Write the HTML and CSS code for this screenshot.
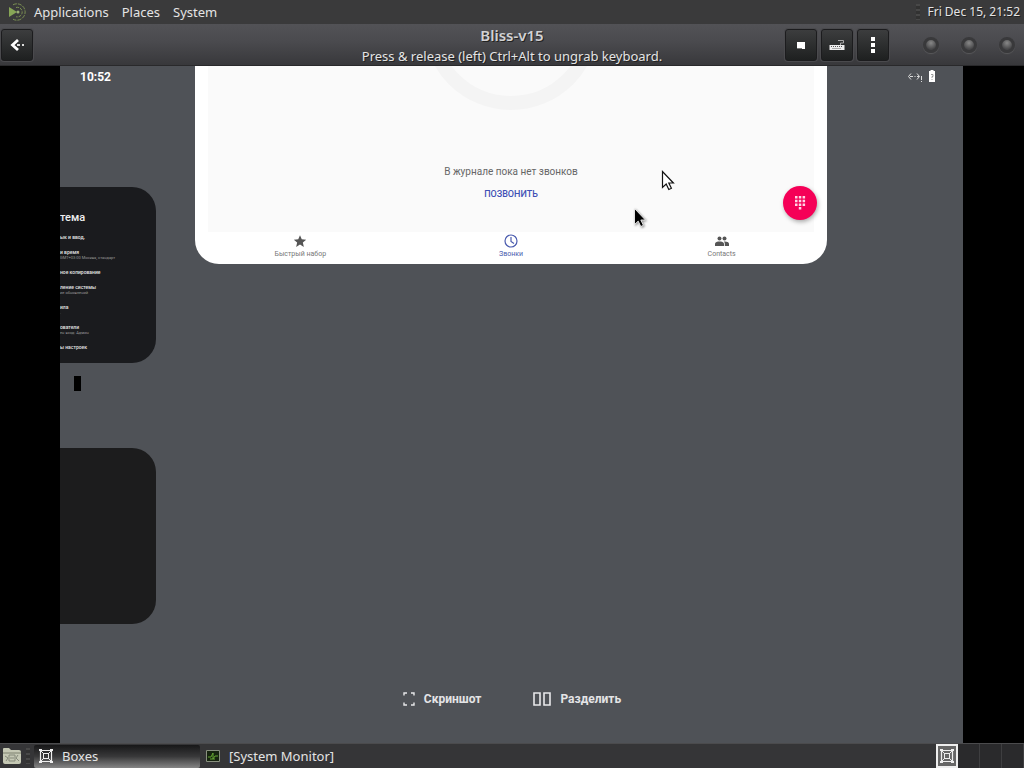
FILE: index.html
```html
<!DOCTYPE html>
<html lang="en">
<head>
<meta charset="utf-8">
<title>Bliss-v15</title>
<link rel="stylesheet" href="styles.css">
</head>
<body>
<svg class="defs" aria-hidden="true">
  <symbol id="boxes" viewBox="0 0 16 16"><g fill="none" stroke="#eee"><path d="M2.500 2.500h11v11h-11z" stroke-width="1.200"/><path d="M5.500 5.500h5v5h-5zM2 2l4 4M14 2l-4 4M2 14l4-4M14 14l-4-4"/></g><path fill="#eee" d="M1 1h3v2H1zM12 1h3v2h-3zM1 13h3v2H1zM12 13h3v2h-3z"/></symbol>
</svg>
<nav class="panel">
  <svg class="logo" width="20" height="20" viewBox="0 0 20 20" aria-hidden="true"><path d="M2 5v10l8-5z" fill="#87a556"/><g fill="none" stroke="#7b9153"><path d="M6 2.8A8.200 8.200 0 1 1 6 17.200" stroke-dasharray="4 1"/><path d="M9 5.500a4.800 4.800 0 1 1 0 9.200" stroke-dasharray="3 1"/></g><circle cx="11" cy="10" r="1.500" fill="#99ad75"/></svg>
  <button>Applications</button><button>Places</button><button>System</button>
  <span class="grip end"></span>
  <time>Fri Dec 15, 21:52</time>
</nav>
<header class="titlebar">
  <button class="tool" aria-label="Back"><svg width="18" height="18" viewBox="0 0 18 18"><path d="M10 4L4.500 9l5.500 5" fill="none" stroke="#fff" stroke-width="2.800"/><path d="M9 8h3v2H9zM14 8h2v2h-2z" fill="#ddd"/></svg></button>
  <div class="title"><h1>Bliss-v15</h1><p>Press &amp; release (left) Ctrl+Alt to ungrab keyboard.</p></div>
  <div class="right">
    <button class="tool" aria-label="Fullscreen"><svg width="18" height="18" viewBox="0 0 18 18"><path d="M5 6h8v7H5z" fill="#fff"/><path d="M5 12h5v1H5z" fill="#777"/></svg></button>
    <button class="tool" aria-label="Keyboard"><svg width="18" height="18" viewBox="0 0 18 18"><path d="M1.500 9h15v5h-15z" fill="#eee"/><path d="M3 10.500h12" stroke="#555" stroke-dasharray="1 1"/><path d="M4 12.500h9" stroke="#aaa"/><path d="M12.500 9V7h3V4.500H10" fill="none" stroke="#aaa"/></svg></button>
    <button class="tool" aria-label="Menu"><svg width="18" height="18" viewBox="0 0 18 18"><path d="M7 1h4v4H7zM7 7h4v4H7zM7 13h4v4H7z" fill="#fff"/></svg></button>
    <div class="window-controls"><button aria-label="Minimize"></button><button aria-label="Maximize"></button><button aria-label="Close"></button></div>
  </div>
</header>
<main class="screen">
  <div class="android" lang="ru">
    <aside class="recents">
      <time class="clock">10:52</time>
      <section class="card settings">
        <h2>тема</h2>
        <ul>
          <li><b>ык и ввод,</b></li>
          <li><b>и время</b><span>GMT+03:00 Москва, стандарт</span></li>
          <li><b>ное копирование</b></li>
          <li><b>ление системы</b><span>ие обновлений</span></li>
          <li><b>ила</b><span>.</span></li>
          <li><b>ователи</b><span>ен вход: Админ</span></li>
          <li><b>ы настроек</b></li>
        </ul>
      </section>
      <span class="caret"></span>
      <section class="card"></section>
    </aside>
    <div class="center">
      <section class="dialer">
        <div class="log">
          <div class="ring"></div>
          <p>В журнале пока нет звонков</p>
          <button class="call">ПОЗВОНИТЬ</button>
          <button class="fab" aria-label="Набор номера"><svg width="12" height="14" viewBox="0 0 12 14" fill="#ffd6e6"><path d="M1 0h2.500v2.500H1zM4.800 0h2.500v2.500H4.800zM8.600 0h2.500v2.500H8.600zM1 3.700h2.500v2.500H1zM4.800 3.700h2.500v2.500H4.800zM8.600 3.700h2.500v2.500H8.600zM1 7.400h2.500v2.500H1zM4.800 7.400h2.500v2.500H4.800zM8.600 7.400h2.500v2.500H8.600zM4.800 11.100h2.500v2.500H4.800z"/></svg></button>
        </div>
        <nav class="tabs">
          <button><svg width="14" height="14" viewBox="0 0 24 24" fill="#555"><path d="M12 2l3 7 7.600.7-5.700 5 1.700 7.400L12 18.200l-6.600 3.900 1.700-7.400-5.700-5L9 9z"/></svg>Быстрый набор</button>
          <button class="active"><svg width="14" height="14" viewBox="0 0 14 14" fill="none" stroke="#4a5bae" stroke-width="1.200"><circle cx="7" cy="7" r="6"/><path d="M7 3v4.500l3 2"/></svg>Звонки</button>
          <button><svg width="14" height="14" viewBox="0 0 14 14" fill="#555"><circle cx="4.500" cy="4.500" r="2"/><circle cx="9.500" cy="4.500" r="2"/><path d="M0 12V9.800C0 8 2.500 7.500 4.500 7.500S9 8 9 9.800V12zM9.800 12V9.800c0-1-.4-1.600-1-2.200 2.300-.3 5.200.5 5.200 2.200V12z"/></svg>Contacts</button>
        </nav>
      </section>
      <div class="actions">
        <button><svg width="12" height="16" viewBox="0 0 12 16" fill="none" stroke="#e8e8ea" stroke-width="1.400"><path d="M1 4.500V2h3M8 2h3v2.500M11 11.500V14H8M4 14H1v-2.500"/></svg>Скриншот</button>
        <button><svg width="18" height="16" viewBox="0 0 18 16" fill="none" stroke="#e8e8ea" stroke-width="1.600"><path d="M1 2h6v12H1zM11 2h6v12h-6z"/></svg>Разделить</button>
      </div>
    </div>
    <div class="status">
      <svg width="16" height="12" viewBox="0 0 16 12" fill="none" stroke="#ddd"><path d="M4 3.500L1.500 6.500 4 9.500M10 3.500l2.500 3-2.500 3M3 6.500h3M7.500 6.500h1M10 6.500h2M14.500 6v4M14.500 11v1"/></svg>
      <svg width="6" height="12" viewBox="0 0 6 12"><path d="M1.500 0h3v1H6v11H0V1h1.500z" fill="#fff"/><path d="M2 4.500h2v2H3V8M3 9v1" fill="none" stroke="#888" stroke-width=".8"/></svg>
    </div>
  </div>
  <svg class="pointer light" width="14" height="21" viewBox="0 0 14 21"><path d="M1.500 1.500v16l3.700-3.400 2.600 5.400 2.600-1.200-2.600-5.300h4.600z" fill="#fff" stroke="#111" stroke-width="1.200"/></svg>
  <svg class="pointer dark" width="14" height="21" viewBox="0 0 14 21"><path d="M1.500 1.500v16l3.700-3.400 2.600 5.400 2.600-1.200-2.600-5.300h4.600z" fill="#000" stroke="#fff" stroke-width=".8"/></svg>
</main>
<footer class="taskbar">
  <button class="desk" aria-label="Files"><svg width="20" height="18" viewBox="0 0 20 18"><path d="M1 2q0-1 1-1h5l2 2h8q2 0 2 2v10q0 2-2 2H3q-2 0-2-2z" fill="#c5c8b4"/><path d="M1 6h18" stroke="#7c806e"/><path d="M7 8h6v6H7zM3 9l3 2-2 3M16 8l-2 3 3 3M8 11h4" fill="none" stroke="#85897a"/></svg></button>
  <span class="grip"></span>
  <button class="task current"><svg width="16" height="16"><use href="#boxes"/></svg>Boxes</button>
  <button class="task"><svg width="16" height="16" viewBox="0 0 16 16"><path d="M1.500 2.500h13v11h-13z" fill="#16240f" stroke="#89907f"/><path d="M3 9h3l2-4v6l2-3h3M5 11h5" fill="none" stroke="#65a532"/></svg>[System Monitor]</button>
  <div class="pager"><button class="selected" aria-label="Workspace 1"><svg width="16" height="16"><use href="#boxes"/></svg></button><button aria-label="Workspace 2"></button><button aria-label="Workspace 3"></button><button aria-label="Workspace 4"></button></div>
</footer>
</body>
</html>
```

FILE: styles.css
```css
* { box-sizing: border-box; }
body { margin: 0; min-height: 100vh; display: flex; flex-direction: column; font: 13px/18px "Noto Sans", sans-serif; color: #e4e4e4; background: #000; }
button { margin: 0; padding: 0; border: 0; background: none; color: inherit; font: inherit; }
h1, h2, p, ul { margin: 0; padding: 0; }
svg { display: block; flex: none; }
.defs { position: absolute; width: 0; height: 0; }

.panel { height: 24px; display: flex; align-items: center; gap: 13px; padding: 0 4px 0 7px; background: #3a3a3b; white-space: nowrap; text-shadow: 1px 1px #222; }
.logo { margin-right: -6px; }
.panel time { font-size: 12px; }
.grip { width: 4px; height: 16px; background: repeating-linear-gradient(#484848 0 2px, #323232 2px 5px); }
.end { margin-left: auto; margin-right: -6px; }

.titlebar { height: 42px; display: grid; grid-template-columns: 1fr auto 1fr; align-items: center; padding: 0 9px 0 1px; background: linear-gradient(#525256, #4b4b4f 40%, #38383b); border-bottom: 1px solid #29292b; }
.tool { width: 32px; height: 32px; display: grid; place-items: center; border: 1px solid #1c1c1e; border-radius: 3px; background: linear-gradient(#3c3d3e, #1e2020); box-shadow: 0 0 0 1px #4a4a4d; }
.title { padding-left: 8px; text-align: center; text-shadow: 1px 1px #222; }
.title h1 { font-size: 15px; line-height: 22px; font-weight: 600; color: #d2d2d4; }
.title p { line-height: 20px; white-space: nowrap; }
.right { display: flex; justify-content: flex-end; align-items: center; gap: 4px; }
.window-controls { display: flex; gap: 22px; padding-left: 30px; }
.window-controls button { width: 16px; height: 16px; border-radius: 50%; border: 3px solid #39393b; background: radial-gradient(circle at 50% 30%, #888, #48484a 70%); box-shadow: 0 1px 1px #5a5a5c; }

.screen { flex: 1; display: flex; position: relative; padding: 0 61px 0 60px; overflow: hidden; }
.android { flex: 1; display: grid; grid-template-columns: 135px 1fr 136px; background: #4f5257; font-family: Roboto, sans-serif; }
.recents { display: flex; flex-direction: column; align-items: flex-start; }
.clock { height: 121px; padding: 2px 0 0 20px; font-size: 12px; font-weight: 700; color: #fff; }
.card { width: 96px; height: 176px; border-radius: 0 24px 24px 0; background: #1c1c1d; overflow: hidden; white-space: nowrap; }
.settings { background: #1a1b1e; padding-top: 24px; }
.settings h2 { font-size: 11px; line-height: 14px; font-weight: 500; color: #eee; }
.settings ul { display: flex; flex-direction: column; gap: 10px; padding-top: 10px; list-style: none; font-size: 5px; line-height: 5px; }
.settings b { display: block; font-weight: 500; }
.settings span { display: block; font-size: 4px; color: #999; }
.caret { width: 7px; height: 15px; margin: 13px 14px 57px; background: #000; }

.center { display: flex; flex-direction: column; justify-content: space-between; }
.dialer { border-radius: 0 0 24px 24px; background: #fff; overflow: hidden; }
.log { position: relative; height: 166px; margin: 0 13px; display: flex; flex-direction: column; align-items: center; background: #fafafa; color: #666; font-size: 10px; line-height: 14px; }
.ring { flex: none; width: 176px; height: 176px; margin-top: -132px; border: 14px solid #f4f4f4; border-radius: 50%; }
.log p { padding: 55px 0 8px; }
.call { color: #3f51b5; font-size: 9px; font-weight: 500; }
.fab { position: absolute; right: -3px; bottom: 12px; width: 34px; height: 34px; border-radius: 50%; display: grid; place-items: center; background: #f50057; box-shadow: 1px 2px 4px #aaa; }
.tabs { display: grid; grid-template-columns: repeat(3, 1fr); height: 32px; font-size: 7px; line-height: 10px; color: #777; }
.tabs button { display: flex; flex-direction: column; align-items: center; justify-content: flex-start; gap: 1px; padding-top: 2px; }
.tabs .active { color: #4a5bae; }
.actions { display: flex; justify-content: center; gap: 52px; padding: 0 0 34px 2px; font-size: 12px; line-height: 20px; font-weight: 700; color: #e4e4e6; }
.actions button { display: flex; align-items: center; gap: 9px; }
.status { display: flex; align-items: flex-start; justify-content: flex-end; gap: 6px; padding: 4px 28px 0 0; }
.pointer { position: absolute; }
.light { left: 661px; top: 104px; }
.dark { left: 633px; top: 141px; filter: drop-shadow(1px 1px 1px #888); }

.taskbar { height: 25px; display: flex; align-items: center; gap: 4px; padding: 0 0 0 2px; background: #353537; border-top: 1px solid #4b4b4d; text-shadow: 1px 1px #222; }
.task { height: 23px; display: flex; align-items: center; gap: 8px; width: 166px; padding-left: 4px; }
.task.current { background: linear-gradient(#171718, #39393a 50%, #858585); border-radius: 2px; }
.task:not(.current) { padding-left: 1px; }
.pager { display: flex; align-self: stretch; margin-left: auto; background: #2a2a2c; }
.pager button { width: 22px; border-right: 1px solid #3e3e40; }
.pager .selected { display: grid; place-items: center; border: 2px solid #eee; background: #666; }
```
